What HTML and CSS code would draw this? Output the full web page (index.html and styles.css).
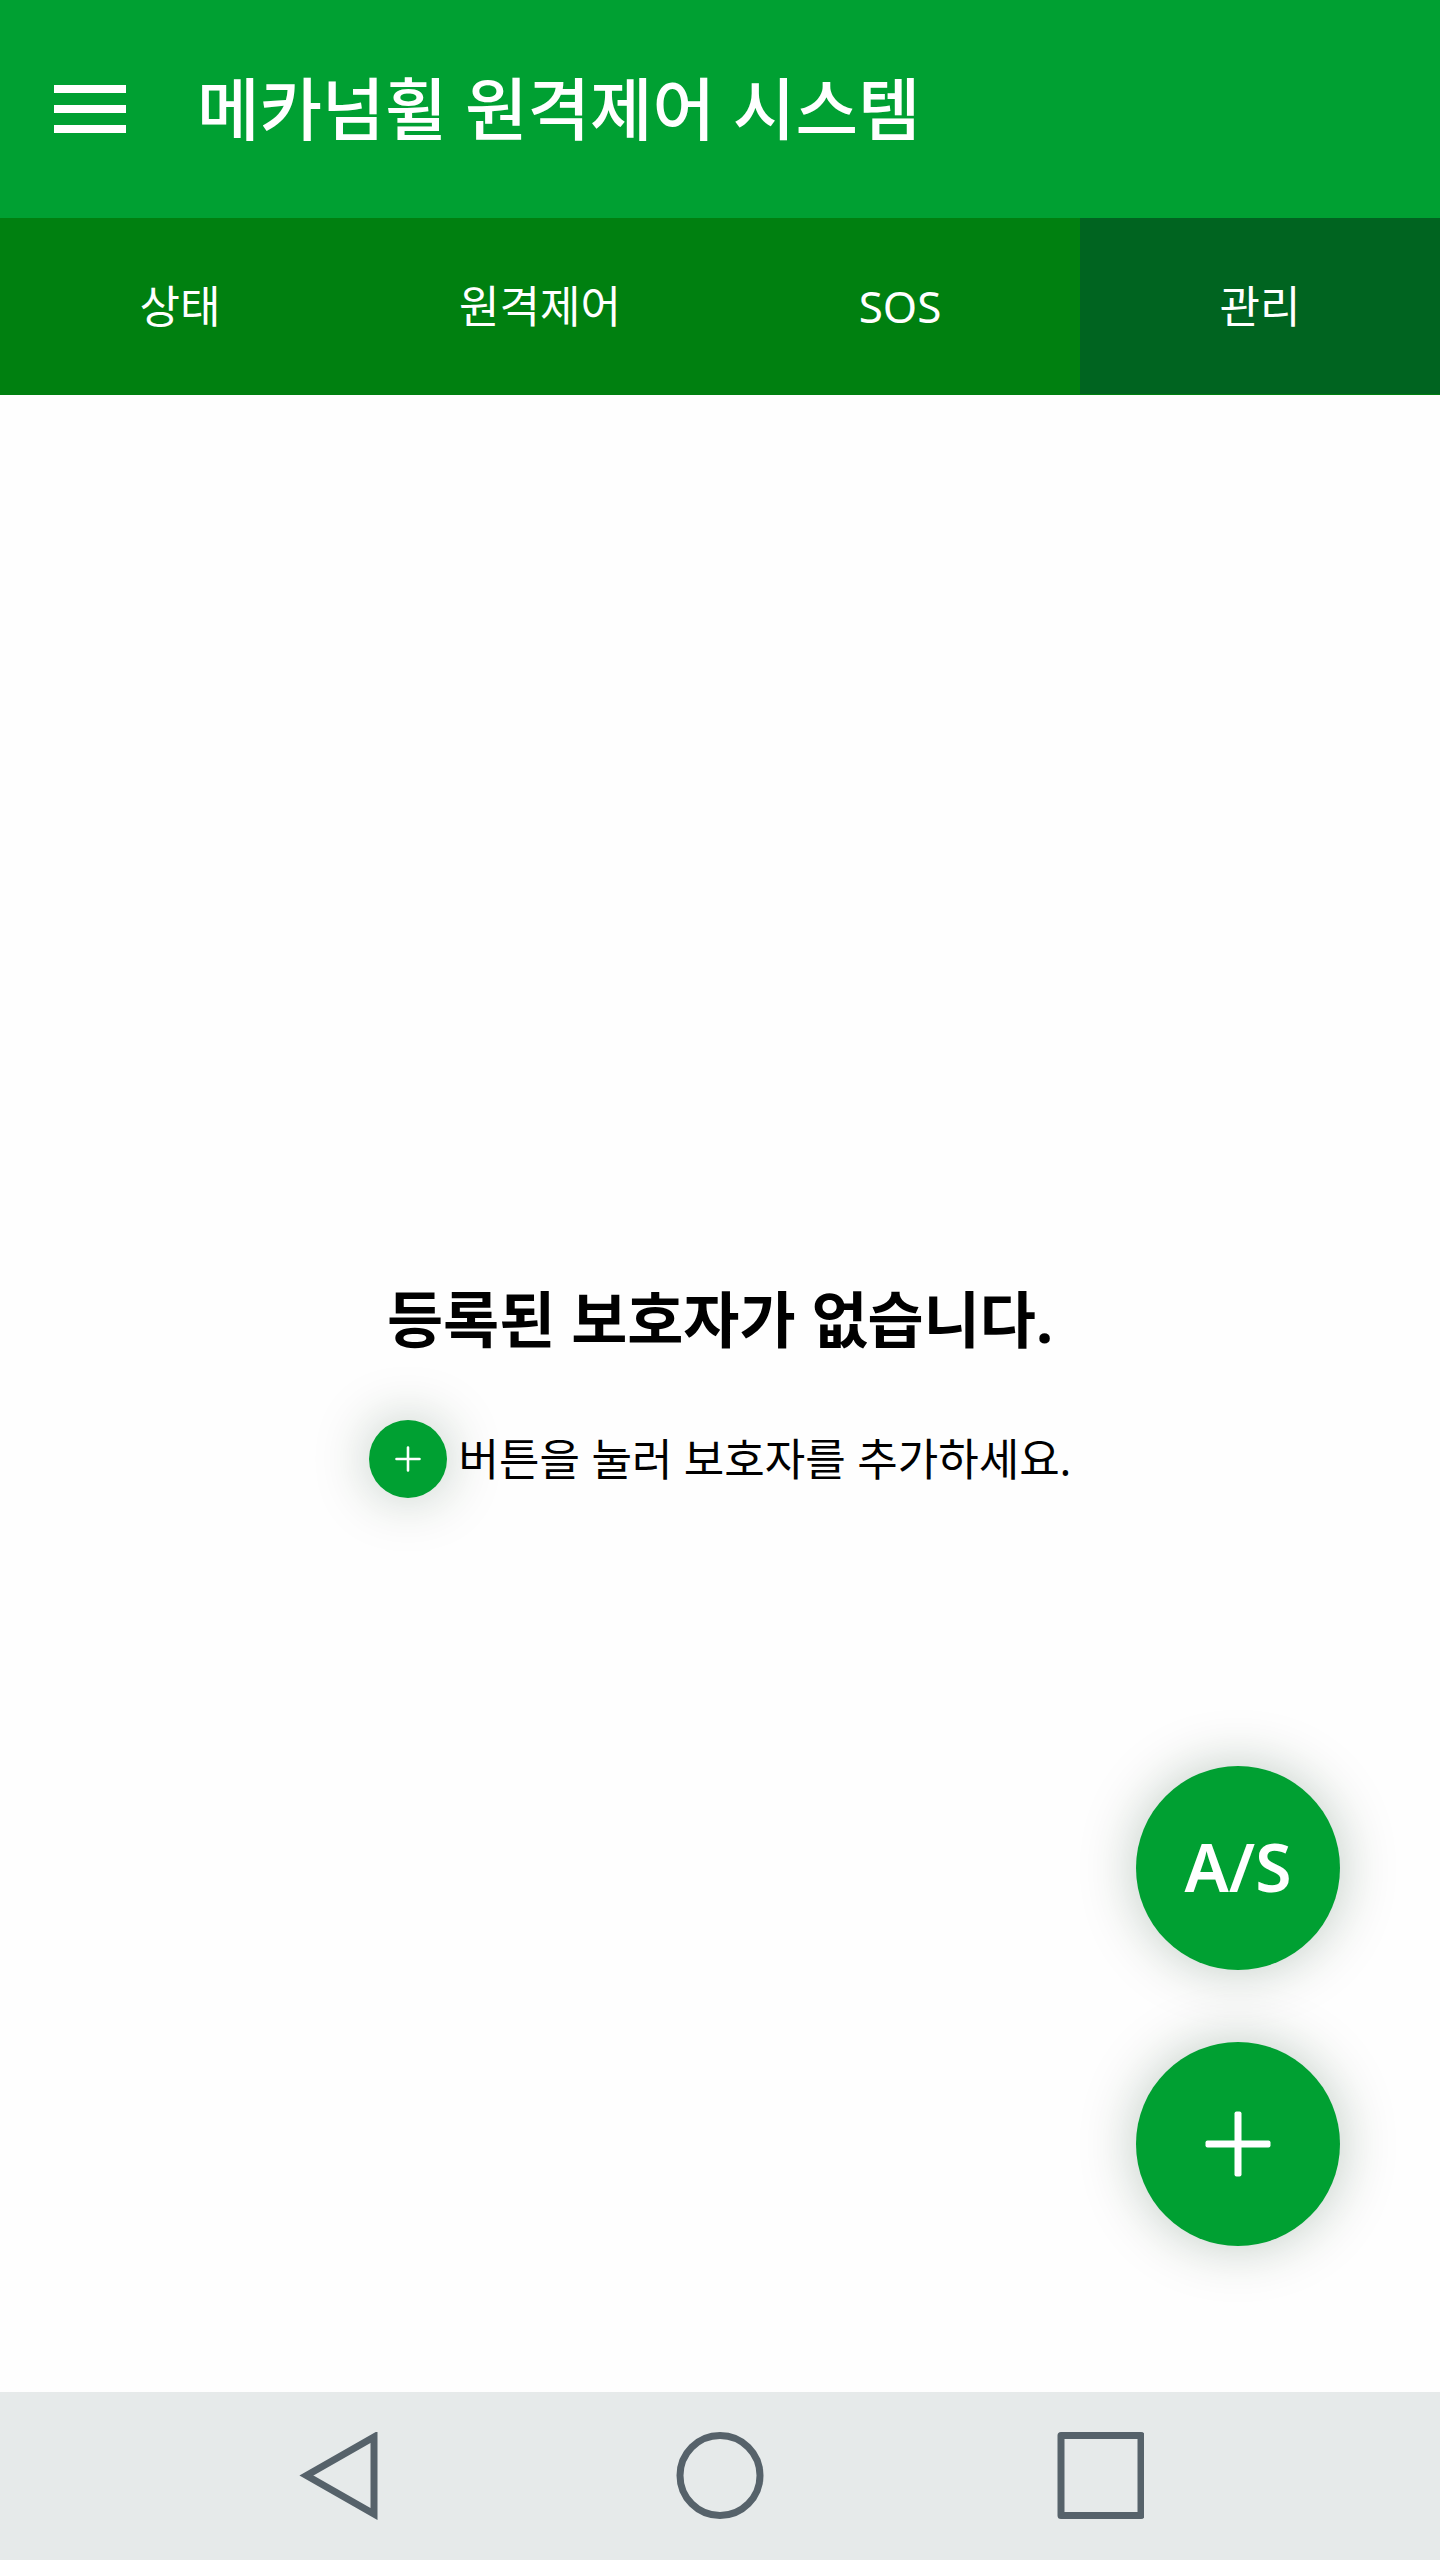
FILE: index.html
```html
<!DOCTYPE html>
<html lang="ko">
<head>
  <meta charset="utf-8">
  <meta name="viewport" content="width=device-width, initial-scale=1">
  <title>메카넘휠 원격제어 시스템</title>
  <link rel="stylesheet" href="styles.css">
</head>
<body class="app">
  <header class="app-bar">
    <button class="menu-button" type="button" aria-label="메뉴">
      <svg class="menu-icon" viewBox="0 0 72 48" aria-hidden="true">
        <path d="M0 0h72v8H0zM0 20h72v8H0zM0 40h72v8H0z" fill="currentColor"/>
      </svg>
    </button>
    <h1 class="app-title">메카넘휠 원격제어 시스템</h1>
  </header>

  <nav class="tabs">
    <a class="tab" href="#status">상태</a>
    <a class="tab" href="#remote">원격제어</a>
    <a class="tab" href="#sos">SOS</a>
    <a class="tab tab-active" href="#manage" aria-current="page">관리</a>
  </nav>

  <main class="content">
    <section class="empty">
      <h2 class="empty-title">등록된 보호자가 없습니다.</h2>
      <p class="empty-hint">
        <span class="hint-badge">
          <svg class="hint-icon" viewBox="0 0 26 26" aria-hidden="true">
            <path d="M13 1.5v23M1.5 13h23" stroke="currentColor" stroke-width="2.6" stroke-linecap="round"/>
          </svg>
        </span>
        <span>버튼을 눌러 보호자를 추가하세요.</span>
      </p>
    </section>
    <div class="fabs">
      <button class="fab fab-text" type="button">A/S</button>
      <button class="fab" type="button" aria-label="보호자 추가">
        <svg class="fab-icon" viewBox="0 0 66 66" aria-hidden="true">
          <rect x="0.5" y="29.5" width="65" height="7" rx="2" fill="currentColor"/>
          <rect x="29.5" y="0.5" width="7" height="65" rx="2" fill="currentColor"/>
        </svg>
      </button>
    </div>
  </main>

  <footer class="system-bar">
    <button class="system-button" type="button" aria-label="뒤로">
      <svg class="system-icon" viewBox="0 0 88 88" aria-hidden="true">
        <path d="M78 5V82L10.500 43.500Z" stroke-linejoin="miter"/>
      </svg>
    </button>
    <button class="system-button" type="button" aria-label="홈">
      <svg class="system-icon" viewBox="0 0 88 88" aria-hidden="true">
        <circle cx="44" cy="43.500" r="40"/>
      </svg>
    </button>
    <button class="system-button" type="button" aria-label="최근 앱">
      <svg class="system-icon" viewBox="0 0 88 88" aria-hidden="true">
        <rect x="5" y="3.500" width="80" height="80" stroke-linejoin="round"/>
      </svg>
    </button>
  </footer>
</body>
</html>
```
FILE: styles.css
```css
* {
  box-sizing: border-box;
}

.app {
  display: flex;
  flex-direction: column;
  min-height: 100vh;
  margin: 0;
  background: #fefefe;
  color: #000;
  font-family: "Noto Sans", "Noto Sans CJK KR", sans-serif;
}

button {
  padding: 0;
  border: 0;
  background: none;
  color: inherit;
  font: inherit;
  cursor: pointer;
}

svg {
  display: block;
  fill: none;
}

.app-bar {
  display: flex;
  align-items: center;
  gap: 71px;
  min-height: 218px;
  padding: 0 54px;
  background: #00a032;
  color: #fff;
}

.menu-icon {
  width: 72px;
  height: 48px;
}

.app-title {
  margin: 0;
  font-size: 68px;
  font-weight: 500;
  line-height: 80px;
}

.tabs {
  display: grid;
  grid-template-columns: repeat(4, 1fr);
  border-bottom: 1px solid #008010;
  background: #008010;
}

.tab {
  padding: 58px 0;
  color: #fff;
  font-size: 44px;
  line-height: 60px;
  text-align: center;
  text-decoration: none;
}

.tab-active {
  background: #006420;
}

.content {
  position: relative;
  display: flex;
  flex: 1;
  flex-direction: column;
  align-items: center;
  justify-content: center;
  padding-bottom: 10px;
}

.empty {
  display: flex;
  flex-direction: column;
  align-items: center;
  gap: 60px;
}

.empty-title {
  margin: 0;
  font-size: 61px;
  font-weight: 700;
  line-height: 80px;
}

.empty-hint {
  display: flex;
  align-items: center;
  gap: 12px;
  margin: 0;
  font-size: 44px;
  line-height: 60px;
}

.hint-badge {
  display: grid;
  place-items: center;
  width: 78px;
  height: 78px;
  border-radius: 50%;
  background: #00a032;
  box-shadow: 0 0 56px rgba(0, 50, 20, 0.26);
  color: #fff;
}

.hint-icon {
  width: 26px;
  height: 26px;
}

.fabs {
  position: absolute;
  right: 100px;
  bottom: 146px;
  display: flex;
  flex-direction: column;
  gap: 72px;
}

.fab {
  display: grid;
  place-items: center;
  width: 204px;
  height: 204px;
  border-radius: 50%;
  background: #00a032;
  box-shadow: 0 0 56px rgba(0, 50, 20, 0.26);
  color: #fff;
}

.fab-text {
  padding-bottom: 4px;
  font-size: 66px;
  font-weight: 600;
  line-height: 80px;
}

.fab-icon {
  width: 66px;
  height: 66px;
}

.system-bar {
  display: grid;
  grid-template-columns: repeat(3, 1fr);
  min-height: 168px;
  padding: 0 150px;
  background: #e6eaea;
  color: #56626a;
}

.system-button {
  display: grid;
  place-items: center;
}

.system-icon {
  width: 88px;
  height: 88px;
  stroke: currentColor;
  stroke-width: 7;
}
```
